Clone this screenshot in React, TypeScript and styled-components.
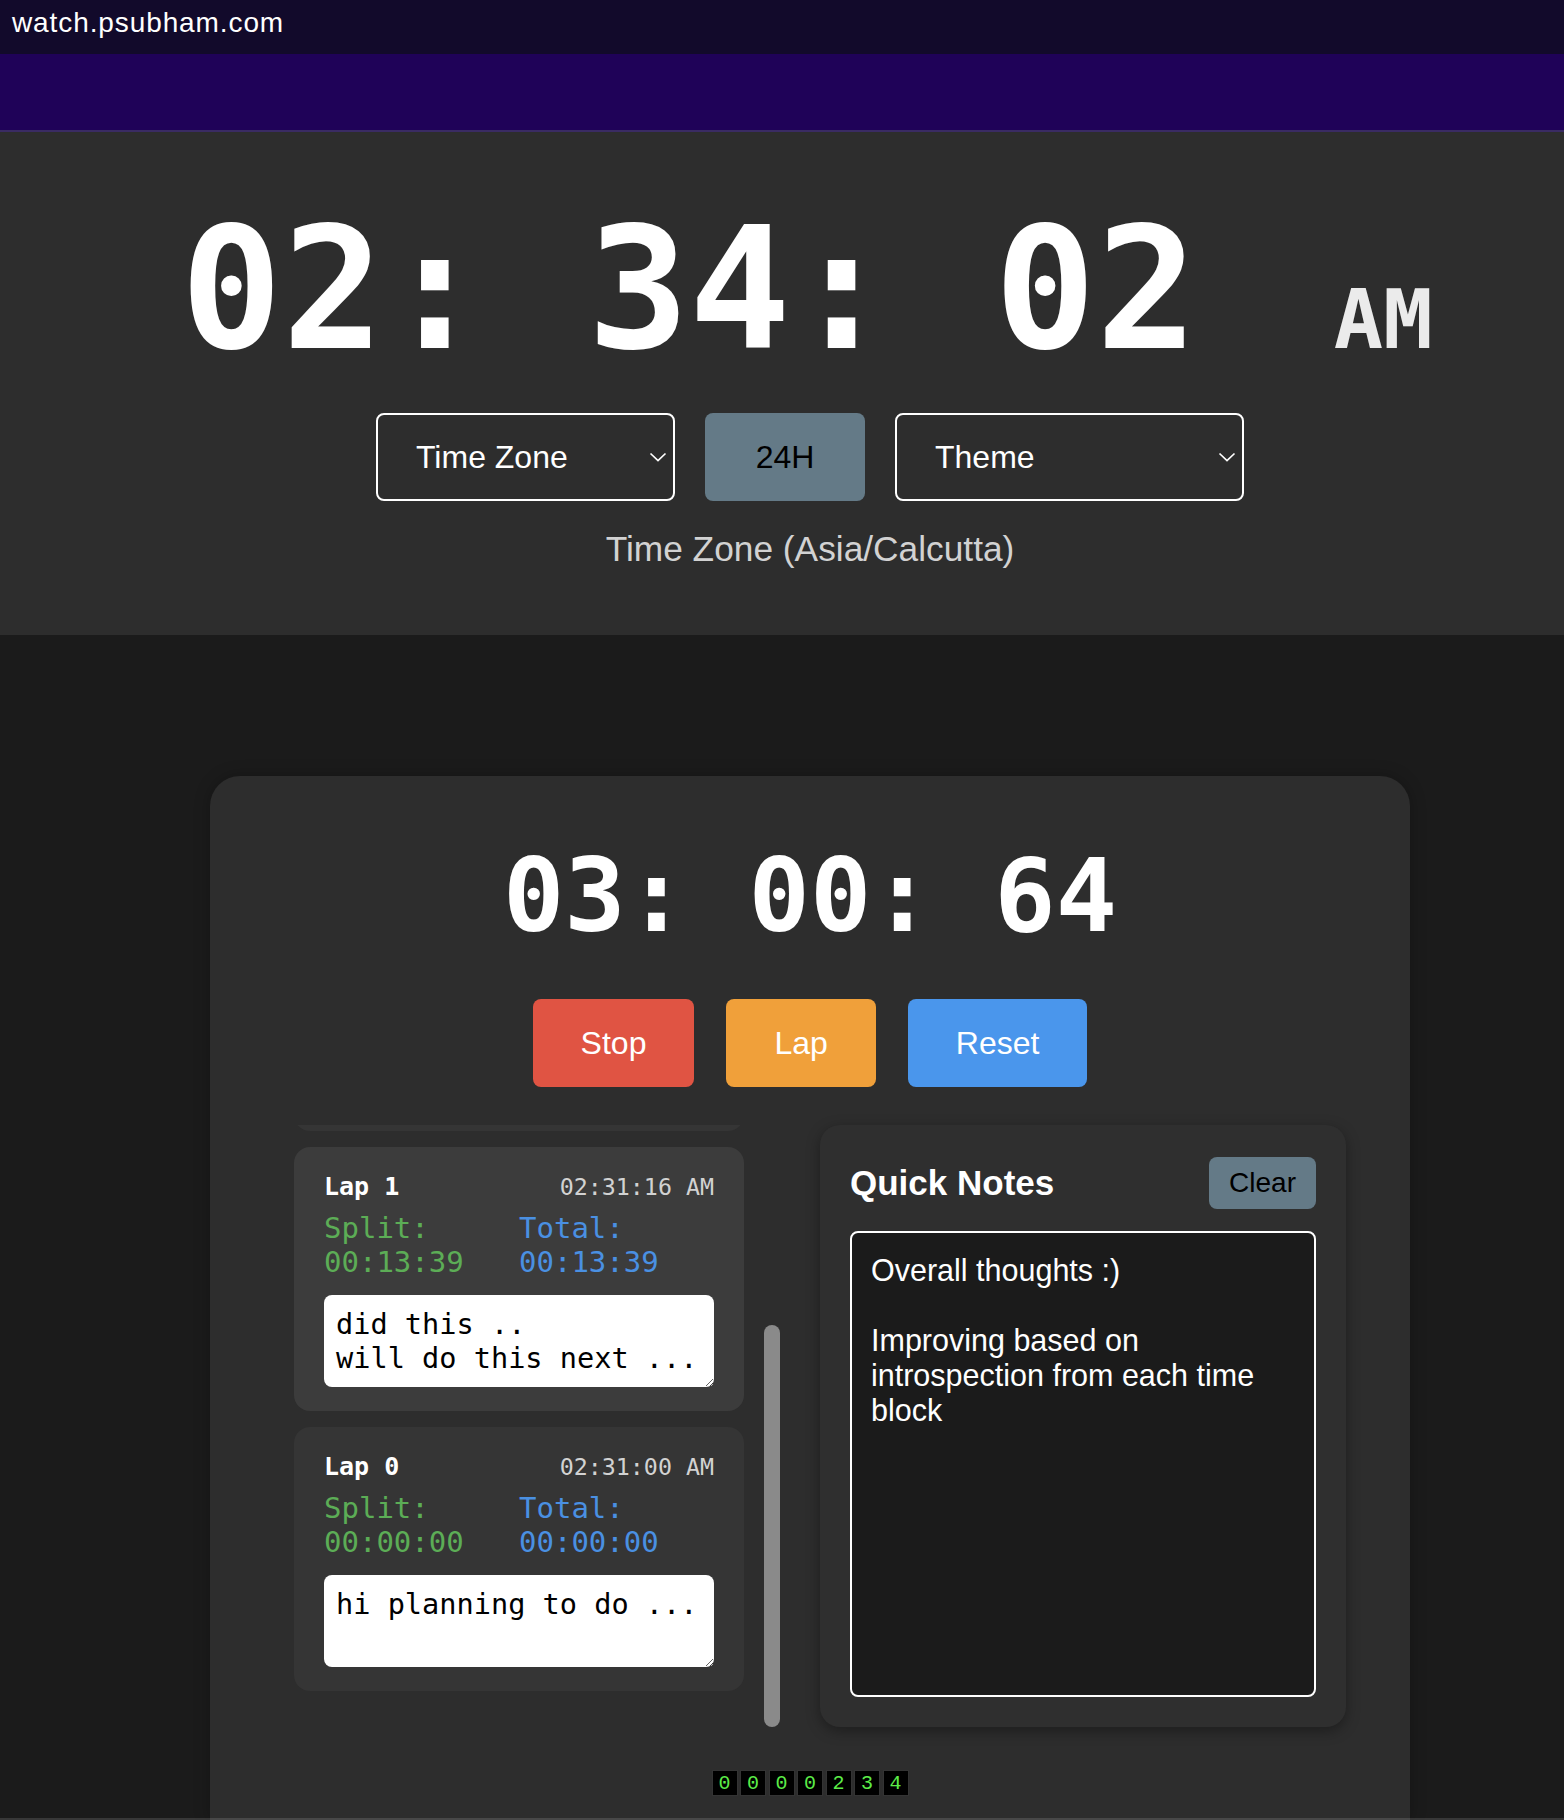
import React, { useLayoutEffect, useRef } from "react";
import styled, { createGlobalStyle } from "styled-components";

const Global = createGlobalStyle`
  html, body {
    margin: 0;
    padding: 0;
    overflow: hidden;
    background: #1b1b1b;
  }
  body {
    font-family: "Liberation Sans", Arial, sans-serif;
  }
  * { box-sizing: border-box; }
`;

const MONO = `"DejaVu Sans Mono", "Liberation Mono", monospace`;

const Page = styled.div`
  width: 1564px;
  height: 1820px;
  display: flex;
  flex-direction: column;
  background: #1b1b1b;
`;

const TopBar = styled.header`
  height: 54px;
  background: #120a2b;
  display: flex;
  align-items: center;
  padding: 0 0 8px 12px;
`;

const SiteName = styled.span`
  color: #ffffff;
  font-size: 28px;
  letter-spacing: 0.9px;
`;

const Band = styled.div`
  height: 78px;
  background: #1f0258;
  border-bottom: 2px solid #3a2b63;
`;

const ClockSection = styled.section`
  background: #2d2d2d;
  padding: 73px 0 66px 56px;
  display: flex;
  flex-direction: column;
  align-items: center;
`;

const ClockRow = styled.div`
  display: flex;
  align-items: baseline;
  padding-right: 7px;
`;

const Digits = styled.span<{ $size: number }>`
  font-family: ${MONO};
  font-weight: 700;
  font-size: ${(p) => p.$size}px;
  line-height: 1;
  color: #ffffff;
  white-space: pre;
`;

const Meridiem = styled.span`
  font-family: ${MONO};
  font-weight: 700;
  font-size: 82px;
  line-height: 1;
  color: #ebebeb;
  margin-left: 136px;
`;

const Controls = styled.div`
  margin-top: 39px;
  display: flex;
  gap: 30px;
`;

const SelectBox = styled.div<{ $w: number }>`
  width: ${(p) => p.$w}px;
  height: 88px;
  border: 2px solid #ffffff;
  border-radius: 8px;
  display: flex;
  align-items: center;
  justify-content: space-between;
  padding: 0 6px 0 38px;
  color: #ffffff;
  font-size: 32px;
`;

const FormatButton = styled.button`
  width: 160px;
  height: 88px;
  border: none;
  border-radius: 8px;
  background: #647a87;
  color: #000000;
  font-family: "Liberation Sans", Arial, sans-serif;
  font-size: 32px;
`;

const ZoneLabel = styled.div`
  margin-top: 28px;
  color: #d2d2d2;
  font-size: 35.3px;
  line-height: 40px;
`;

const Main = styled.main`
  flex: 1;
  padding: 141px 0 0 56px;
  overflow: hidden;
`;

const Card = styled.div`
  width: 1200px;
  margin: 0 auto;
  background: #2d2d2d;
  border-radius: 30px 30px 0 0;
  box-shadow: 0 0 16px rgba(0, 0, 0, 0.25);
  padding: 69px 0 24px;
  display: flex;
  flex-direction: column;
  align-items: center;
`;

const ButtonRow = styled.div`
  margin-top: 52px;
  display: flex;
  gap: 32px;
`;

const ActionButton = styled.button<{ $bg: string }>`
  height: 88px;
  padding: 0 48px;
  border: none;
  border-radius: 8px;
  background: ${(p) => p.$bg};
  color: #ffffff;
  font-family: "Liberation Sans", Arial, sans-serif;
  font-size: 32px;
`;

const Workspace = styled.div`
  align-self: stretch;
  margin-top: 38px;
  padding-left: 84px;
  display: grid;
  grid-template-columns: 486px 526px;
  column-gap: 40px;
  height: 602px;
`;

const LapColumn = styled.div`
  position: relative;
  height: 602px;
`;

const LapList = styled.div`
  height: 100%;
  overflow: hidden;
`;

const ScrollThumb = styled.div`
  position: absolute;
  right: 0;
  top: 200px;
  width: 16px;
  height: 402px;
  border-radius: 8px;
  background: #8a8a8a;
`;

const LapStack = styled.div`
  display: flex;
  flex-direction: column;
  gap: 16px;
  padding: 41px 36px 36px 0;
`;

const LapCard = styled.div<{ $active?: boolean }>`
  background: ${(p) => (p.$active ? "#3c3c3c" : "#353535")};
  border-radius: 16px;
  padding: 25px 30px 24px;
  font-family: ${MONO};
`;

const LapHeader = styled.div`
  display: flex;
  justify-content: space-between;
  align-items: baseline;
  height: 30px;
  line-height: 30px;
`;

const LapTitle = styled.span`
  font-weight: 700;
  font-size: 25px;
  color: #ffffff;
  white-space: pre;
`;

const LapTime = styled.span`
  font-size: 23.3px;
  color: #d2d2d2;
`;

const LapStats = styled.div`
  margin-top: 9px;
  display: grid;
  grid-template-columns: 1fr 1fr;
`;

const Stat = styled.div<{ $color: string }>`
  font-size: 29px;
  line-height: 34px;
  color: ${(p) => p.$color};
`;

const LapNote = styled.textarea`
  display: block;
  margin-top: 16px;
  width: 100%;
  height: 92px;
  padding: 12px 12px 10px;
  border: none;
  border-radius: 8px;
  background: #ffffff;
  color: #000000;
  font-family: ${MONO};
  font-size: 28.6px;
  line-height: 34px;
  overflow: hidden;
  resize: vertical;
  outline: none;
`;

const NotesPanel = styled.div`
  background: #2f2f2f;
  border-radius: 20px;
  box-shadow: 0 4px 14px rgba(0, 0, 0, 0.35);
  padding: 32px 30px 30px;
  display: flex;
  flex-direction: column;
`;

const NotesHeader = styled.div`
  height: 52px;
  display: flex;
  justify-content: space-between;
  align-items: center;
`;

const NotesTitle = styled.h2`
  margin: 0;
  font-size: 35px;
  font-weight: 700;
  color: #ffffff;
`;

const ClearButton = styled.button`
  height: 52px;
  padding: 0 20px;
  border: none;
  border-radius: 8px;
  background: #647a87;
  color: #000000;
  font-family: "Liberation Sans", Arial, sans-serif;
  font-size: 28px;
`;

const NotesArea = styled.textarea`
  margin-top: 22px;
  flex: 1;
  width: 100%;
  background: #1b1b1b;
  border: 2px solid #ffffff;
  border-radius: 8px;
  padding: 20px 19px 19px;
  color: #ffffff;
  font-family: "Liberation Sans", Arial, sans-serif;
  font-size: 30.5px;
  line-height: 35px;
  resize: none;
  outline: none;
`;

const Counter = styled.div`
  margin-top: 43px;
  display: flex;
  gap: 2.5px;
`;

const CounterDigit = styled.span`
  width: 26px;
  height: 26px;
  background: #000000;
  border: 1px solid #333333;
  display: flex;
  align-items: center;
  justify-content: center;
  font-family: "Liberation Mono", "Courier New", monospace;
  font-size: 20px;
  color: #5cec48;
`;

const WindowEdge = styled.div`
  position: fixed;
  left: 0;
  right: 0;
  bottom: 0;
  height: 2px;
  background: rgba(255, 255, 255, 0.13);
`;

const Chevron = () => (
  <svg width="18" height="10" viewBox="0 0 18 10" aria-hidden="true">
    <polyline points="1.5,1.5 9,8.5 16.5,1.5" fill="none" stroke="#ffffff" strokeWidth="1.7" />
  </svg>
);

type Lap = { n: number; at: string; split: string; total: string; note: string; active?: boolean };

const laps: Lap[] = [
  { n: 2, at: "02:33:40 AM", split: "00:02:24", total: "00:16:03", note: "next step ..." },
  { n: 1, at: "02:31:16 AM", split: "00:13:39", total: "00:13:39", note: "did this ..\nwill do this next ...", active: true },
  { n: 0, at: "02:31:00 AM", split: "00:00:00", total: "00:00:00", note: "hi planning to do ..." },
];

export default function App() {
  const listRef = useRef<HTMLDivElement>(null);
  useLayoutEffect(() => {
    const el = listRef.current;
    if (el) el.scrollTop = el.scrollHeight;
  }, []);

  return (
    <>
      <Global />
      <Page>
        <TopBar>
          <SiteName>watch.psubham.com</SiteName>
        </TopBar>
        <Band />
        <ClockSection>
          <ClockRow>
            <Digits $size={169}>02: 34: 02</Digits>
            <Meridiem>AM</Meridiem>
          </ClockRow>
          <Controls>
            <SelectBox $w={299}>
              <span>Time Zone</span>
              <Chevron />
            </SelectBox>
            <FormatButton>24H</FormatButton>
            <SelectBox $w={349}>
              <span>Theme</span>
              <Chevron />
            </SelectBox>
          </Controls>
          <ZoneLabel>Time Zone (Asia/Calcutta)</ZoneLabel>
        </ClockSection>
        <Main>
          <Card>
            <Digits $size={102}>03: 00: 64</Digits>
            <ButtonRow>
              <ActionButton $bg="#e05443">Stop</ActionButton>
              <ActionButton $bg="#f0a03a">Lap</ActionButton>
              <ActionButton $bg="#4a96ec">Reset</ActionButton>
            </ButtonRow>
            <Workspace>
              <LapColumn>
                <LapList ref={listRef}>
                  <LapStack>
                    {laps.map((lap) => (
                      <LapCard key={lap.n} $active={lap.active}>
                        <LapHeader>
                          <LapTitle>{`Lap ${lap.n}`}</LapTitle>
                          <LapTime>{lap.at}</LapTime>
                        </LapHeader>
                        <LapStats>
                          <Stat $color="#5cad56">Split: {lap.split}</Stat>
                          <Stat $color="#4a90e2">Total: {lap.total}</Stat>
                        </LapStats>
                        <LapNote defaultValue={lap.note} />
                      </LapCard>
                    ))}
                  </LapStack>
                </LapList>
                <ScrollThumb />
              </LapColumn>
              <NotesPanel>
                <NotesHeader>
                  <NotesTitle>Quick Notes</NotesTitle>
                  <ClearButton>Clear</ClearButton>
                </NotesHeader>
                <NotesArea
                  defaultValue={"Overall thoughts :)\n\nImproving based on introspection from each time block"}
                />
              </NotesPanel>
            </Workspace>
            <Counter>
              {"0000234".split("").map((d, i) => (
                <CounterDigit key={i}>{d}</CounterDigit>
              ))}
            </Counter>
          </Card>
        </Main>
        <WindowEdge />
      </Page>
    </>
  );
}
